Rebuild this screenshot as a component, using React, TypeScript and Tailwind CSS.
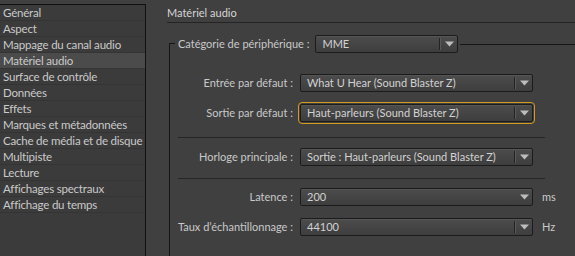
import React from 'react';

const categories = [
  'Général',
  'Aspect',
  'Mappage du canal audio',
  'Matériel audio',
  'Surface de contrôle',
  'Données',
  'Effets',
  'Marques et métadonnées',
  'Cache de média et de disque',
  'Multipiste',
  'Lecture',
  'Affichages spectraux',
  'Affichage du temps',
];

interface DropdownProps {
  value: string;
  width: string;
  focused?: boolean;
  noDivider?: boolean;
}

const Arrow = () => (
  <svg width="9" height="6" viewBox="0 0 9 6" className="shrink-0">
    <path d="M0 0.5h9L4.5 5.5z" fill="#bdbdbd" />
  </svg>
);

const Dropdown: React.FC<DropdownProps> = ({ value, width, focused, noDivider }) => (
  <div
    className={`${width} h-[18px] flex items-center border border-[#1b1b1b] rounded-[2px] bg-gradient-to-b from-[#4c4c4c] to-[#3e3e3e] shadow-[inset_0_1px_0_#555] ${
      focused ? 'outline outline-offset-1 outline-[#d39a1c]' : ''
    }`}
  >
    <span className="flex-1 pl-[6px] truncate text-[#d2d2d2]">{value}</span>
    {!noDivider && <div className="w-px h-[12px] bg-[#222] border-r border-[#5a5a5a] box-content" />}
    <div className="w-[16px] flex justify-center">
      <Arrow />
    </div>
  </div>
);

const Row: React.FC<{ label: string; children: React.ReactNode; unit?: string }> = ({ label, children, unit }) => (
  <div className="flex items-center">
    <div className="w-[125px] text-right pr-[2px] text-[#c9c9c9] whitespace-nowrap">{label}</div>
    <div className="ml-[5px]">{children}</div>
    {unit && <span className="ml-[9px] text-[#c9c9c9]">{unit}</span>}
  </div>
);

const Separator = () => <div className="ml-[8px] w-[367px] h-px bg-[#262626]" />;

export default function App() {
  return (
    <div
      className="w-[575px] h-[256px] flex bg-[#404040] text-[11px] overflow-hidden"
      style={{ fontFamily: 'Lato, "Liberation Sans", sans-serif' }}
    >
      {/* category list */}
      <div className="w-[146px] mt-[4px] shrink-0 bg-[#3b3b3b] border-t border-r border-[#111] text-[11.5px]">
        {categories.map(c => (
          <div
            key={c}
            className={`h-[16px] pl-[3px] leading-[15px] border-b border-[#343434] text-[#cacaca] whitespace-nowrap tracking-[-0.2px] ${
              c === 'Matériel audio' ? 'bg-[#4b4b4b]' : ''
            }`}
          >
            {c}
          </div>
        ))}
      </div>

      {/* settings */}
      <div className="flex-1 pl-[21px] pt-[5px]">
        <div className="h-[18px] leading-[14px] border-b border-[#242424] text-[#d6d6d6] pt-[1px]">Matériel audio</div>

        <div className="ml-[2px] mt-[12px]">
          <div className="flex items-center h-[18px]">
            <div className="self-end w-[6px] h-[10px] border-l border-t border-[#161616]" />
            <span className="ml-[3px] text-[#c9c9c9] whitespace-nowrap">Catégorie de périphérique :</span>
            <div className="ml-[6px]">
              <Dropdown value="MME" width="w-[143px]" />
            </div>
            <div className="flex-1 ml-[2px] h-px bg-[#161616]" />
          </div>

          <div className="border-l border-[#161616] pt-[21px] pb-[30px] flex flex-col">
            <Row label="Entrée par défaut :">
              <Dropdown value="What U Hear (Sound Blaster Z)" width="w-[233px]" />
            </Row>
            <div className="mt-[12px]">
              <Row label="Sortie par défaut :">
                <Dropdown value="Haut-parleurs (Sound Blaster Z)" width="w-[233px]" focused />
              </Row>
            </div>
            <div className="mt-[15px] mb-[10px]">
              <Separator />
            </div>
            <Row label="Horloge principale :">
              <Dropdown value="Sortie : Haut-parleurs (Sound Blaster Z)" width="w-[233px]" />
            </Row>
            <div className="mt-[12px] mb-[9px]">
              <Separator />
            </div>
            <Row label="Latence :" unit="ms">
              <Dropdown value="200" width="w-[233px]" noDivider />
            </Row>
            <div className="mt-[12px]">
              <Row label="Taux d’échantillonnage :" unit="Hz">
                <Dropdown value="44100" width="w-[233px]" />
              </Row>
            </div>
          </div>
        </div>
      </div>
    </div>
  );
}
